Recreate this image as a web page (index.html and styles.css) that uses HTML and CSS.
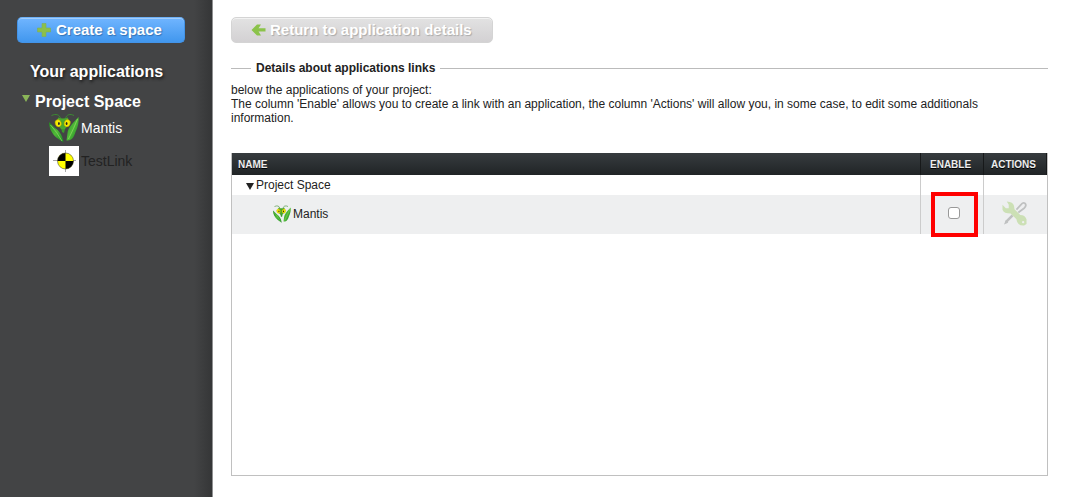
FILE: index.html
```html
<!DOCTYPE html>
<html lang="en">
<head>
<meta charset="utf-8">
<title>Application links</title>
<link rel="stylesheet" href="styles.css">
</head>
<body>
<svg class="defs" aria-hidden="true">
  <defs>
    <linearGradient id="leaf" x1="0" y1="0" x2="1" y2="1">
      <stop offset="0" stop-color="#238c1f"/>
      <stop offset=".5" stop-color="#50b938"/>
      <stop offset="1" stop-color="#168322"/>
    </linearGradient>
    <symbol id="mantis" viewBox="0 0 30 30">
      <path d="M11.500 5.500C10.500 1.500 7 .5 2.500 2.500M16.500 5.500C17.500 1.500 21 .5 25 2.500" fill="none" stroke="#3c8b32" stroke-width="1"/>
      <path d="M0 9C0 15 3 21 8 25L14.500 29.500C14 24 11 18 6 15Z" fill="url(#leaf)"/>
      <path d="M29.500 4C23 11 19 15 18.500 20L17.500 27.500C23 28 25 24 26.500 19C29 14 30 9 29.500 4Z" fill="url(#leaf)"/>
      <path d="M1.500 12Q8 19 13 28M28.500 6Q25 15 19.500 26" fill="none" stroke="#94dc66" stroke-width=".7"/>
      <path d="M9 4.500Q14 6.500 19 4.500L20 11L16 16Q14 18 12 16L8 11Z" fill="#4aa72e"/>
      <path d="M12.500 16L13 19L15 20L16 16Z" fill="#3a9a2c"/>
      <ellipse cx="9.200" cy="10.200" rx="3" ry="3.700" transform="rotate(-18 9.200 10.200)" fill="#f6e900" stroke="#b0a500" stroke-width=".5"/>
      <ellipse cx="18.200" cy="10.200" rx="3" ry="3.700" transform="rotate(18 18.200 10.200)" fill="#f6e900" stroke="#b0a500" stroke-width=".5"/>
      <ellipse cx="9.900" cy="10.500" rx=".9" ry="1.500" fill="#222"/>
      <ellipse cx="17.600" cy="10.500" rx=".9" ry="1.500" fill="#222"/>
    </symbol>
  </defs>
</svg>
<div class="page">
  <aside class="sidebar">
    <button class="button button-primary" type="button">
      <svg class="icon-plus" viewBox="0 0 14 14" aria-hidden="true"><path d="M5 0.500H9V5H13.500V9H9V13.500H5V9H.5V5H5Z" fill="#8cc049" stroke="#7fae55" stroke-width=".6"/></svg>
      <span>Create a space</span>
    </button>
    <h2 class="sidebar-title">Your applications</h2>
    <div class="space">
      <svg class="space-arrow" viewBox="0 0 8 7" aria-hidden="true"><path d="M0 0H8L4 7Z" fill="#8ab558"/></svg>
      <h3 class="space-name">Project Space</h3>
    </div>
    <ul class="apps">
      <li><a class="app" href="#mantis"><svg class="app-icon" aria-hidden="true"><use href="#mantis"/></svg>Mantis</a></li>
      <li><a class="app app-disabled" href="#testlink"><svg class="app-icon" viewBox="0 0 30 30" aria-hidden="true">
        <path d="M0 0H30V30H0Z" fill="#fff"/>
        <path d="M4 14.500H27M16.500 4V26" stroke="#aaa" stroke-width="1"/>
        <circle cx="16.500" cy="15" r="8" fill="#ff0"/>
        <path d="M16.500 15H8.500A8 8 0 0 1 16.500 7ZM16.500 15H24.500A8 8 0 0 1 16.500 23Z" fill="#000"/>
        <circle cx="16.500" cy="15" r="8" fill="none" stroke="#333" stroke-width=".5"/>
      </svg>TestLink</a></li>
    </ul>
  </aside>
  <main class="main">
    <button class="button button-muted" type="button">
      <svg class="icon-back" viewBox="0 0 15 12" aria-hidden="true"><path d="M6 .5H10L7.500 4.200H14.500V7.500H7.500L10 11.500H6L.5 6Z" fill="#8bc34a"/></svg>
      <span>Return to application details</span>
    </button>
    <h1 class="section-title">Details about applications links</h1>
    <p class="intro">below the applications of your project:<br>The column 'Enable' allows you to create a link with an application, the column 'Actions' will allow you, in some case, to edit some additionals information.</p>
    <div class="panel">
      <table class="links">
        <thead>
          <tr><th scope="col">NAME</th><th scope="col" class="col-enable">ENABLE</th><th scope="col" class="col-actions">ACTIONS</th></tr>
        </thead>
        <tbody>
          <tr class="row-space">
            <td><span class="cell-space"><svg class="row-arrow" viewBox="0 0 8 7" aria-hidden="true"><path d="M0 0H8L4 7Z" fill="#222"/></svg>Project Space</span></td>
            <td></td><td></td>
          </tr>
          <tr class="row-app">
            <td><label class="cell-app" for="enable-mantis"><svg class="row-icon" viewBox="0 0 30 30" aria-hidden="true"><use href="#mantis" width="30" height="30"/></svg>Mantis</label></td>
            <td class="cell-enable"><span class="highlight"></span><input class="check" type="checkbox" id="enable-mantis"></td>
            <td class="cell-actions"><button class="tool" type="button" aria-label="Configure"><svg viewBox="0 0 26 26" aria-hidden="true">
              <path d="M4 22L11 15" stroke="#bfc1c1" stroke-width="2.600"/><path d="M2 24.500L4 20L6.500 22.500Z" fill="#bfc1c1"/>
              <path d="M15 9L20 3.500Q22 1 24 2.500Q26 5 23 7.500L17 12" fill="none" stroke="#bfc1c1" stroke-width="1.800"/>
              <path d="M5 .5L8 1Q13 2 13 8.500L19 14.500Q24 14.500 25.500 19V24L23 25.500Q16 26 15 19L9 13Q2 13 .5 9V4L4 7.500H7V4Z" fill="#cce0b5"/>
              <circle cx="22" cy="22" r="1.200" fill="#eeeff0"/>
            </svg></button></td>
          </tr>
        </tbody>
      </table>
    </div>
  </main>
</div>
</body>
</html>
```
FILE: styles.css
```css
* { box-sizing: border-box; }
body {
  margin: 0;
  background: #fff;
  color: #222;
  font: 12px/14px "Liberation Sans", Arial, sans-serif;
}
h1, h2, h3, p, ul { margin: 0; padding: 0; }
ul { list-style: none; }
a { color: inherit; text-decoration: none; }
svg { display: block; flex: none; }
.defs { position: absolute; width: 0; height: 0; }
.page { display: flex; min-height: 100vh; }

.sidebar {
  flex: 0 0 213px;
  padding: 17px 27px 0 17px;
  border-right: 1px solid #909192;
  background: linear-gradient(to left, #353637, #434445 18px);
  color: #fff;
}
.button {
  display: flex;
  align-items: center;
  height: 26px;
  border-radius: 5px;
  padding: 0 19px;
  color: #fff;
  font: bold 15px/18px "Liberation Sans", Arial, sans-serif;
  white-space: nowrap;
}
.button-primary {
  width: 100%;
  gap: 5px;
  border: 1px solid #4394e8;
  border-top-color: #6eb0f5;
  background: linear-gradient(#70b5ff, #4197ee);
  box-shadow: inset 0 1px #a2cdfb;
  text-shadow: 1px 1px 1px #3473b5;
}
.button-muted {
  align-self: flex-start;
  gap: 4px;
  padding-right: 20px;
  border: 1px solid #d4d4d4;
  background: linear-gradient(#e2e2e2, #d3d1d3);
  box-shadow: inset 0 1px #f2f2f2;
  text-shadow: 1px 1px 1px #aaa;
}
.icon-plus { width: 14px; height: 14px; }
.icon-back { width: 15px; height: 12px; }
.sidebar-title {
  margin: 20px 0 0 13px;
  font-size: 16px;
  line-height: 18px;
  text-shadow: 1px 2px 3px #181818;
}
.space { display: flex; gap: 5px; margin: 12px 0 0 5px; }
.space-arrow { width: 8px; height: 7px; margin-top: 2px; }
.space-name { font-size: 16px; line-height: 18px; }
.apps { display: grid; gap: 3px; margin: 2px 0 0 32px; }
.app { display: flex; align-items: center; gap: 2px; font-size: 14px; line-height: 16px; }
.app-disabled { color: #222; }
.app-icon { width: 30px; height: 30px; }

.main {
  flex: 1;
  display: flex;
  flex-direction: column;
  min-width: 0;
  padding: 17px 18px 21px;
}
.section-title {
  display: flex;
  align-items: center;
  gap: 5px;
  margin-top: 18px;
  font-size: 12px;
  line-height: 14px;
}
.section-title::before, .section-title::after {
  content: "";
  width: 20px;
  border-top: 1px solid #bbb;
}
.section-title::after { flex: 1; }
.intro { margin: 8px 0 28px; padding-right: 24px; }
.panel {
  flex: 1;
  border: 1px solid #c0c0c0;
  border-top: 0;
}
.links { width: 100%; border-collapse: separate; border-spacing: 0; table-layout: fixed; }
.links th {
  height: 22px;
  padding: 2px 6px 0;
  border-right: 1px solid #17191a;
  background: linear-gradient(#373c3f, #202426);
  color: #eee;
  font: bold 10px/14px "Liberation Sans", Arial, sans-serif;
  text-align: left;
  text-shadow: 0 1px #000;
}
.links .col-enable { width: 63px; padding: 2px 9px 0; }
.links .col-actions { width: 63px; padding: 2px 7px 0; }
.links td { padding: 0; border-right: 1px solid #ccc; }
.links td:last-child { border-right: 0; }
.row-space td { height: 20px; }
.row-app td { height: 39px; background: #eeeff0; }
.cell-space { display: flex; align-items: center; gap: 2px; padding-left: 14px; }
.row-arrow { width: 8px; height: 7px; margin-top: 2px; }
.cell-app { display: flex; align-items: center; gap: 2px; padding: 0 0 2px 41px; }
.row-icon { width: 18px; height: 18px; }
.cell-enable { position: relative; }
.check {
  display: block;
  appearance: none;
  width: 12px;
  height: 12px;
  margin: 0 0 3px 27px;
  border: 1px solid #999;
  border-radius: 3px;
  background: #fff;
}
.check:checked { background: #4197ee; }
.highlight {
  position: absolute;
  top: -3px;
  left: 10px;
  width: 47px;
  height: 45px;
  border: 4px solid #f00;
  pointer-events: none;
}
.tool { display: block; margin: 0 0 3px 18px; padding: 0; border: 0; background: none; }
.tool svg { width: 25px; height: 25px; }
```
